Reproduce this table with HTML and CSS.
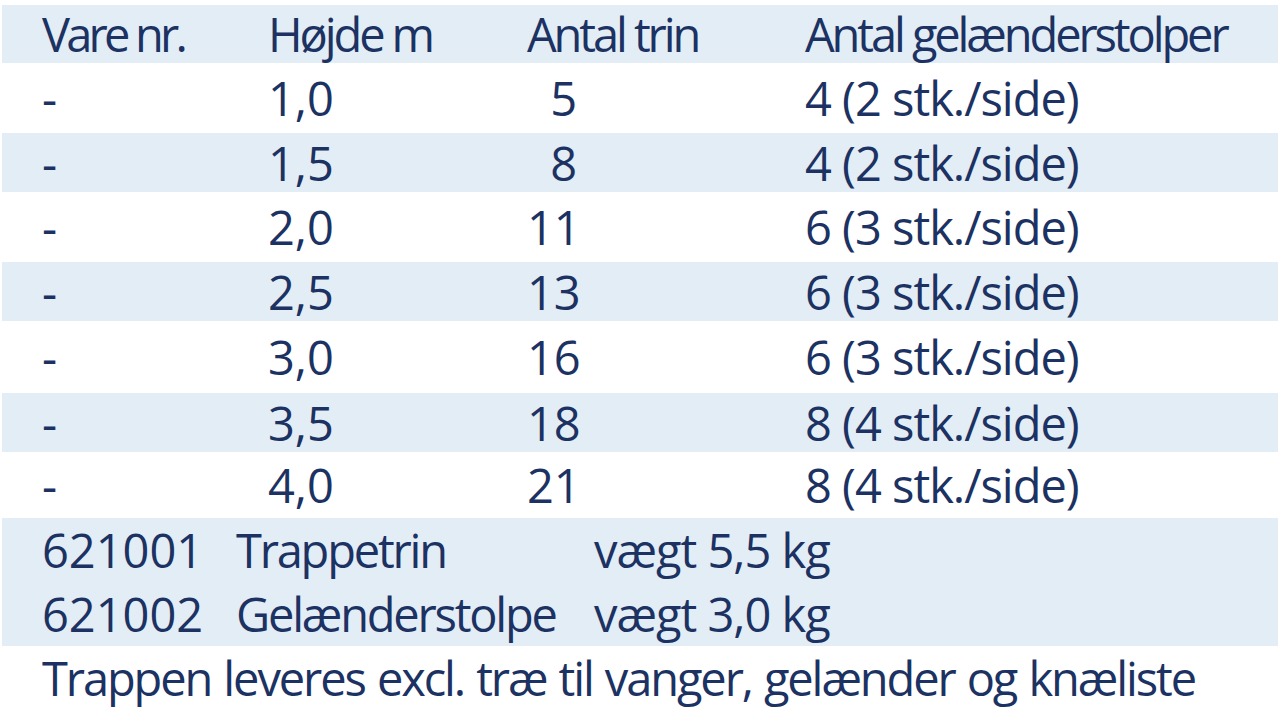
FILE: index.html
```html
<!DOCTYPE html>
<html lang="da">
<head>
<meta charset="utf-8">
<title>Trappe</title>
<link rel="stylesheet" href="styles.css">
</head>
<body>
<div class="sheet">
  <div class="row band h-head">
    <div class="c1 tight">Vare nr.</div><div class="c2">Højde m</div><div class="c3">Antal trin</div><div class="c4">Antal gelænderstolper</div>
  </div>
  <div class="row h-w1">
    <div class="c1">-</div><div class="c2 dig">1,0</div><div class="c3"><span class="num">5</span></div><div class="c4 mix">4 (2 stk./side)</div>
  </div>
  <div class="row band h-b">
    <div class="c1">-</div><div class="c2 dig">1,5</div><div class="c3"><span class="num">8</span></div><div class="c4 mix">4 (2 stk./side)</div>
  </div>
  <div class="row h-w1">
    <div class="c1">-</div><div class="c2 dig">2,0</div><div class="c3"><span class="num">11</span></div><div class="c4 mix">6 (3 stk./side)</div>
  </div>
  <div class="row band h-b">
    <div class="c1">-</div><div class="c2 dig">2,5</div><div class="c3"><span class="num">13</span></div><div class="c4 mix">6 (3 stk./side)</div>
  </div>
  <div class="row h-w2">
    <div class="c1">-</div><div class="c2 dig">3,0</div><div class="c3"><span class="num">16</span></div><div class="c4 mix">6 (3 stk./side)</div>
  </div>
  <div class="row band h-b">
    <div class="c1">-</div><div class="c2 dig">3,5</div><div class="c3"><span class="num">18</span></div><div class="c4 mix">8 (4 stk./side)</div>
  </div>
  <div class="row h-w3">
    <div class="c1">-</div><div class="c2 dig">4,0</div><div class="c3"><span class="num">21</span></div><div class="c4 mix">8 (4 stk./side)</div>
  </div>
  <div class="band parts">
    <div class="prow"><div class="p1 dig">621001</div><div class="p2">Trappetrin</div><div class="p3 mix">vægt 5,5 kg</div></div>
    <div class="prow"><div class="p1 dig">621002</div><div class="p2">Gelænderstolpe</div><div class="p3 mix">vægt 3,0 kg</div></div>
  </div>
  <div class="note">Trappen leveres excl. træ til vanger, gelænder og knæliste</div>
</div>
</body>
</html>
```
FILE: styles.css
```css
html, body {
  margin: 0;
  padding: 0;
  background: #ffffff;
}
body {
  font-family: "Open Sans", "Noto Sans", sans-serif;
  font-size: 47px;
  letter-spacing: -2.6px;
  color: #1b3262;
  overflow: hidden;
}
.sheet {
  padding-top: 5px;
  margin-left: 2px;
  display: flex;
  flex-direction: column;
}
.row {
  display: flex;
  align-items: center;
  padding-left: 40px;
  white-space: nowrap;
}
.band { background: #e3edf6; }
.h-head { height: 58px; letter-spacing: -3.1px; }
.h-head .tight { letter-spacing: -3.8px; }
.h-w1 { height: 70px; }
.h-w2 { height: 72px; }
.h-w3 { height: 66px; }
.h-b { height: 59px; }
.c1, .c2, .c3, .p1, .p2 { flex-shrink: 0; }
.c1 { width: 226px; }
.c2 { width: 259px; }
.c3 { width: 278px; }
.dig, .num { letter-spacing: 0; }
.mix { letter-spacing: -1px; }
.num { display: inline-block; width: 50px; text-align: right; }
.parts {
  display: flex;
  flex-direction: column;
  height: 128px;
}
.prow {
  height: 64px;
  display: flex;
  align-items: center;
  padding-left: 40px;
  white-space: nowrap;
}
.p1 { width: 194px; }
.p2 { width: 358px; letter-spacing: -2.2px; }
.note {
  height: 64px;
  display: flex;
  align-items: center;
  padding-left: 40px;
  white-space: nowrap;
  letter-spacing: -2.1px;
  word-spacing: 2px;
}
```
